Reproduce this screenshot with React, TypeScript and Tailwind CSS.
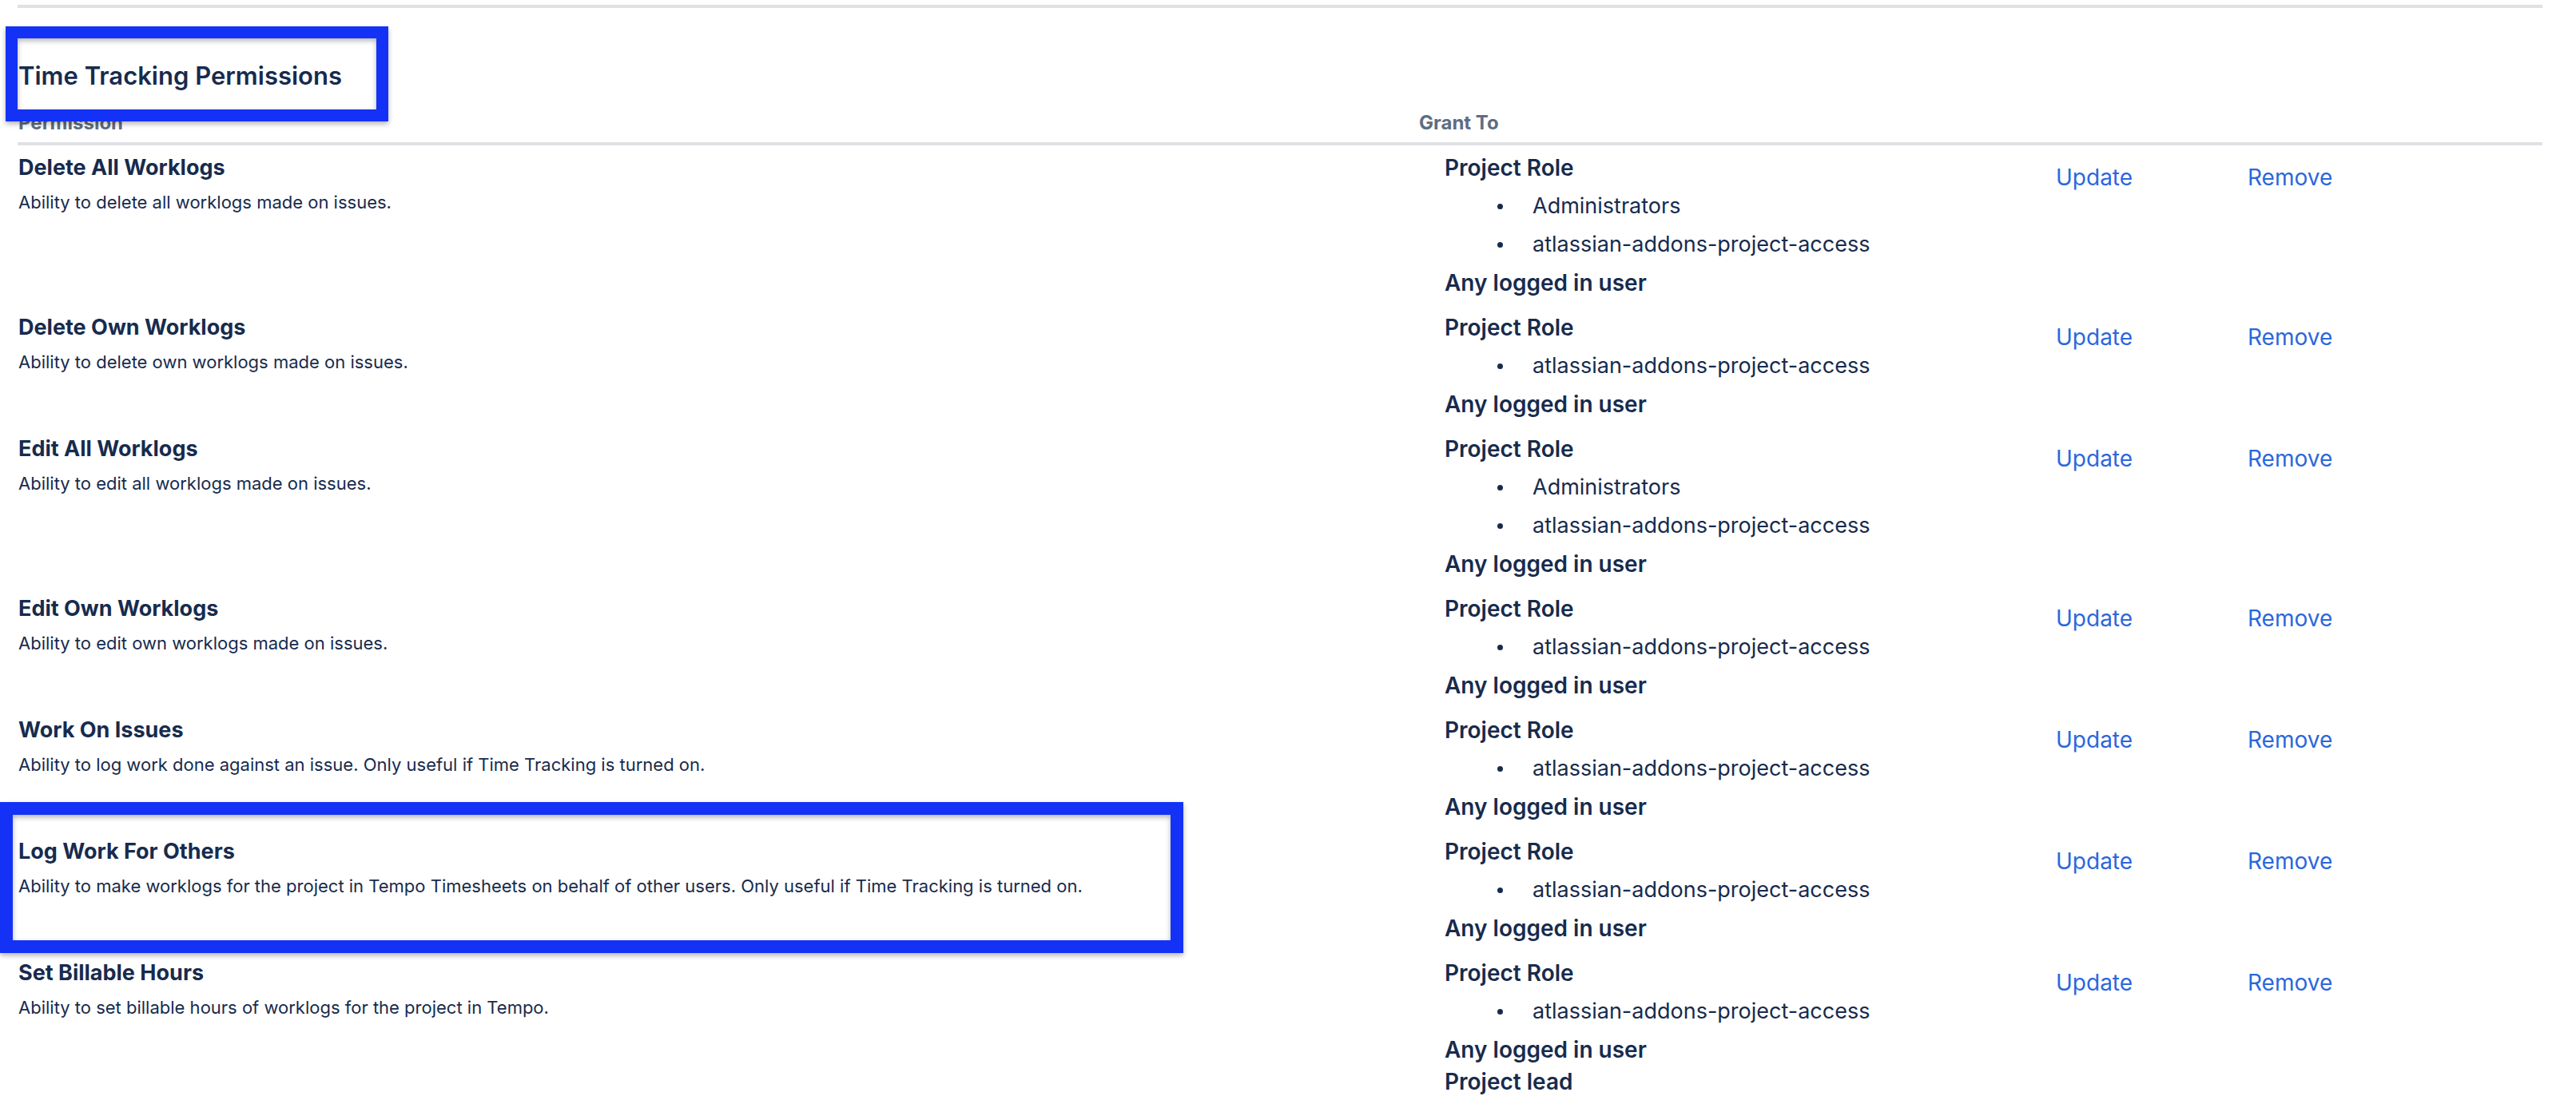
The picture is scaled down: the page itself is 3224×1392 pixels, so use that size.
import React from "react";

type Perm = {
  name: string;
  description: string;
  roles: string[];
  extra: string[];
};

const permissions: Perm[] = [
  {
    name: "Delete All Worklogs",
    description: "Ability to delete all worklogs made on issues.",
    roles: ["Administrators", "atlassian-addons-project-access"],
    extra: ["Any logged in user"],
  },
  {
    name: "Delete Own Worklogs",
    description: "Ability to delete own worklogs made on issues.",
    roles: ["atlassian-addons-project-access"],
    extra: ["Any logged in user"],
  },
  {
    name: "Edit All Worklogs",
    description: "Ability to edit all worklogs made on issues.",
    roles: ["Administrators", "atlassian-addons-project-access"],
    extra: ["Any logged in user"],
  },
  {
    name: "Edit Own Worklogs",
    description: "Ability to edit own worklogs made on issues.",
    roles: ["atlassian-addons-project-access"],
    extra: ["Any logged in user"],
  },
  {
    name: "Work On Issues",
    description: "Ability to log work done against an issue. Only useful if Time Tracking is turned on.",
    roles: ["atlassian-addons-project-access"],
    extra: ["Any logged in user"],
  },
  {
    name: "Log Work For Others",
    description:
      "Ability to make worklogs for the project in Tempo Timesheets on behalf of other users. Only useful if Time Tracking is turned on.",
    roles: ["atlassian-addons-project-access"],
    extra: ["Any logged in user"],
  },
  {
    name: "Set Billable Hours",
    description: "Ability to set billable hours of worklogs for the project in Tempo.",
    roles: ["atlassian-addons-project-access"],
    extra: ["Any logged in user", "Project lead"],
  },
];

function PermissionRow({ perm }: { perm: Perm }) {
  return (
    <div className="grid grid-cols-[1754px_797px_240px_1fr] py-[8px]">
      {/* Permission */}
      <div className="pl-[1px]">
        <div className="text-[27px] font-bold leading-[40px]">{perm.name}</div>
        <div className="mt-[7px] text-[22px] leading-[32px]">{perm.description}</div>
      </div>

      {/* Grant To */}
      <div className="pl-[32px] text-[28px] leading-[40px]">
        <div className="font-semibold">Project Role</div>
        <ul>
          {perm.roles.map((r) => (
            <li key={r} className="mt-[8px] flex items-center pl-[66px]">
              <span className="h-[7px] w-[7px] rounded-full bg-[#172b4d]" />
              <span className="ml-[37px] text-[27px]">{r}</span>
            </li>
          ))}
        </ul>
        <div className="mt-[8px] font-semibold">
          {perm.extra.map((e) => (
            <div key={e}>{e}</div>
          ))}
        </div>
      </div>

      <div className="pt-[12px] text-[28px] leading-[40px] text-[#2b67dc]">Update</div>
      <div className="pt-[12px] text-[28px] leading-[40px] text-[#2b67dc]">Remove</div>
    </div>
  );
}

export default function App() {
  return (
    <div
      className="relative h-[1392px] w-[3224px] overflow-hidden bg-white text-[#172b4d]"
      style={{ fontFamily: "Inter, 'Noto Sans', sans-serif" }}
    >
      <div className="ml-[22px] w-[3160px] pt-[6px]">
        <div className="h-[4px] bg-[#dfe1e6]" />

        <h2 className="mt-[65px] pl-[1px] text-[31px] font-semibold leading-[40px]">Time Tracking Permissions</h2>

        {/* Header */}
        <div className="mt-[23px] grid grid-cols-[1754px_1fr] border-b-[4px] border-[#dfe1e6] pb-[8px] text-[24px] font-bold leading-[32px] text-[#5e6c84]">
          <div className="pl-[1px]">Permission</div>
          <div>Grant To</div>
        </div>

        {permissions.map((p) => (
          <PermissionRow key={p.name} perm={p} />
        ))}
      </div>

      {/* annotation boxes */}
      <div className="absolute left-[7px] top-[33px] h-[119px] w-[479px] border-[15px] border-[#1432f5] drop-shadow-[0_3px_3px_rgba(0,0,0,0.3)]" />
      <div className="absolute left-0 top-[1004px] h-[189px] w-[1481px] border-[16px] border-[#1432f5] drop-shadow-[0_3px_3px_rgba(0,0,0,0.3)]" />
    </div>
  );
}
